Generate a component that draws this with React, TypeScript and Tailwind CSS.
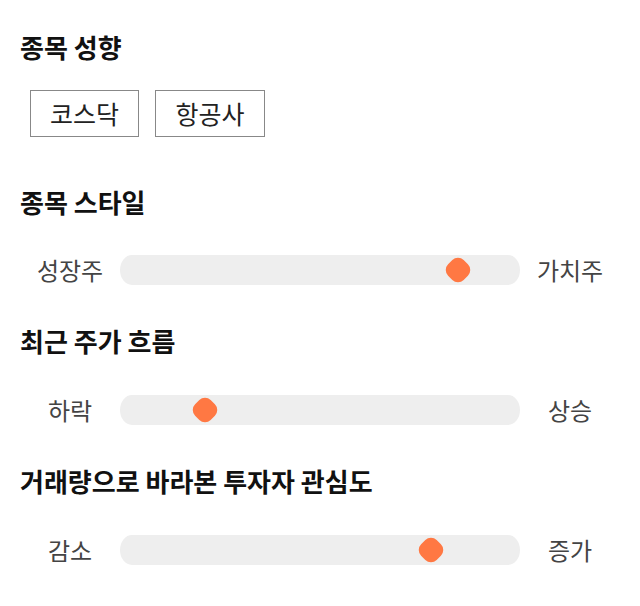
import React from "react";

function Slider({ left, right, value }: { left: string; right: string; value: number }) {
  return (
    <div className="flex items-center h-[30px]">
      <div className="w-[100px] text-center text-[24px] leading-[30px] text-[#444]">{left}</div>
      <div className="relative w-[400px] h-[30px] bg-[#eeeeee] rounded-[12px/15px]">
        <div
          className="absolute top-0 w-[30px] h-[30px] flex items-center justify-center"
          style={{ left: `${value}px` }}
        >
          <div className="w-[22px] h-[22px] rotate-45 rounded-[8px] bg-[#ff7843]" />
        </div>
      </div>
      <div className="w-[100px] text-center text-[24px] leading-[30px] text-[#444]">{right}</div>
    </div>
  );
}

export default function App() {
  return (
    <div className="w-[640px] h-[606px] bg-white px-5 pt-[29px] font-['Noto_Sans_CJK_KR','Noto_Sans',sans-serif]">
      <h2 className="text-[26px] leading-9 font-bold text-[#111]">종목 성향</h2>
      <div className="flex gap-4 mt-[25px] pl-[10px]">
        <div className="w-[109px] h-[47px] border border-[#888] flex items-center justify-center text-[25px] text-[#222]">코스닥</div>
        <div className="w-[110px] h-[47px] border border-[#888] flex items-center justify-center text-[25px] text-[#222]">항공사</div>
      </div>
      <h2 className="text-[26px] leading-9 font-bold text-[#111] mt-[47px]">종목 스타일</h2>
      <div className="mt-[35px]">
        <Slider left="성장주" right="가치주" value={323} />
      </div>
      <h2 className="text-[26px] leading-9 font-bold text-[#111] mt-[38px]">최근 주가 흐름</h2>
      <div className="mt-[36px]">
        <Slider left="하락" right="상승" value={70} />
      </div>
      <h2 className="text-[26px] leading-9 font-bold text-[#111] mt-[38px]">거래량으로 바라본 투자자 관심도</h2>
      <div className="mt-[36px]">
        <Slider left="감소" right="증가" value={296} />
      </div>
    </div>
  );
}
